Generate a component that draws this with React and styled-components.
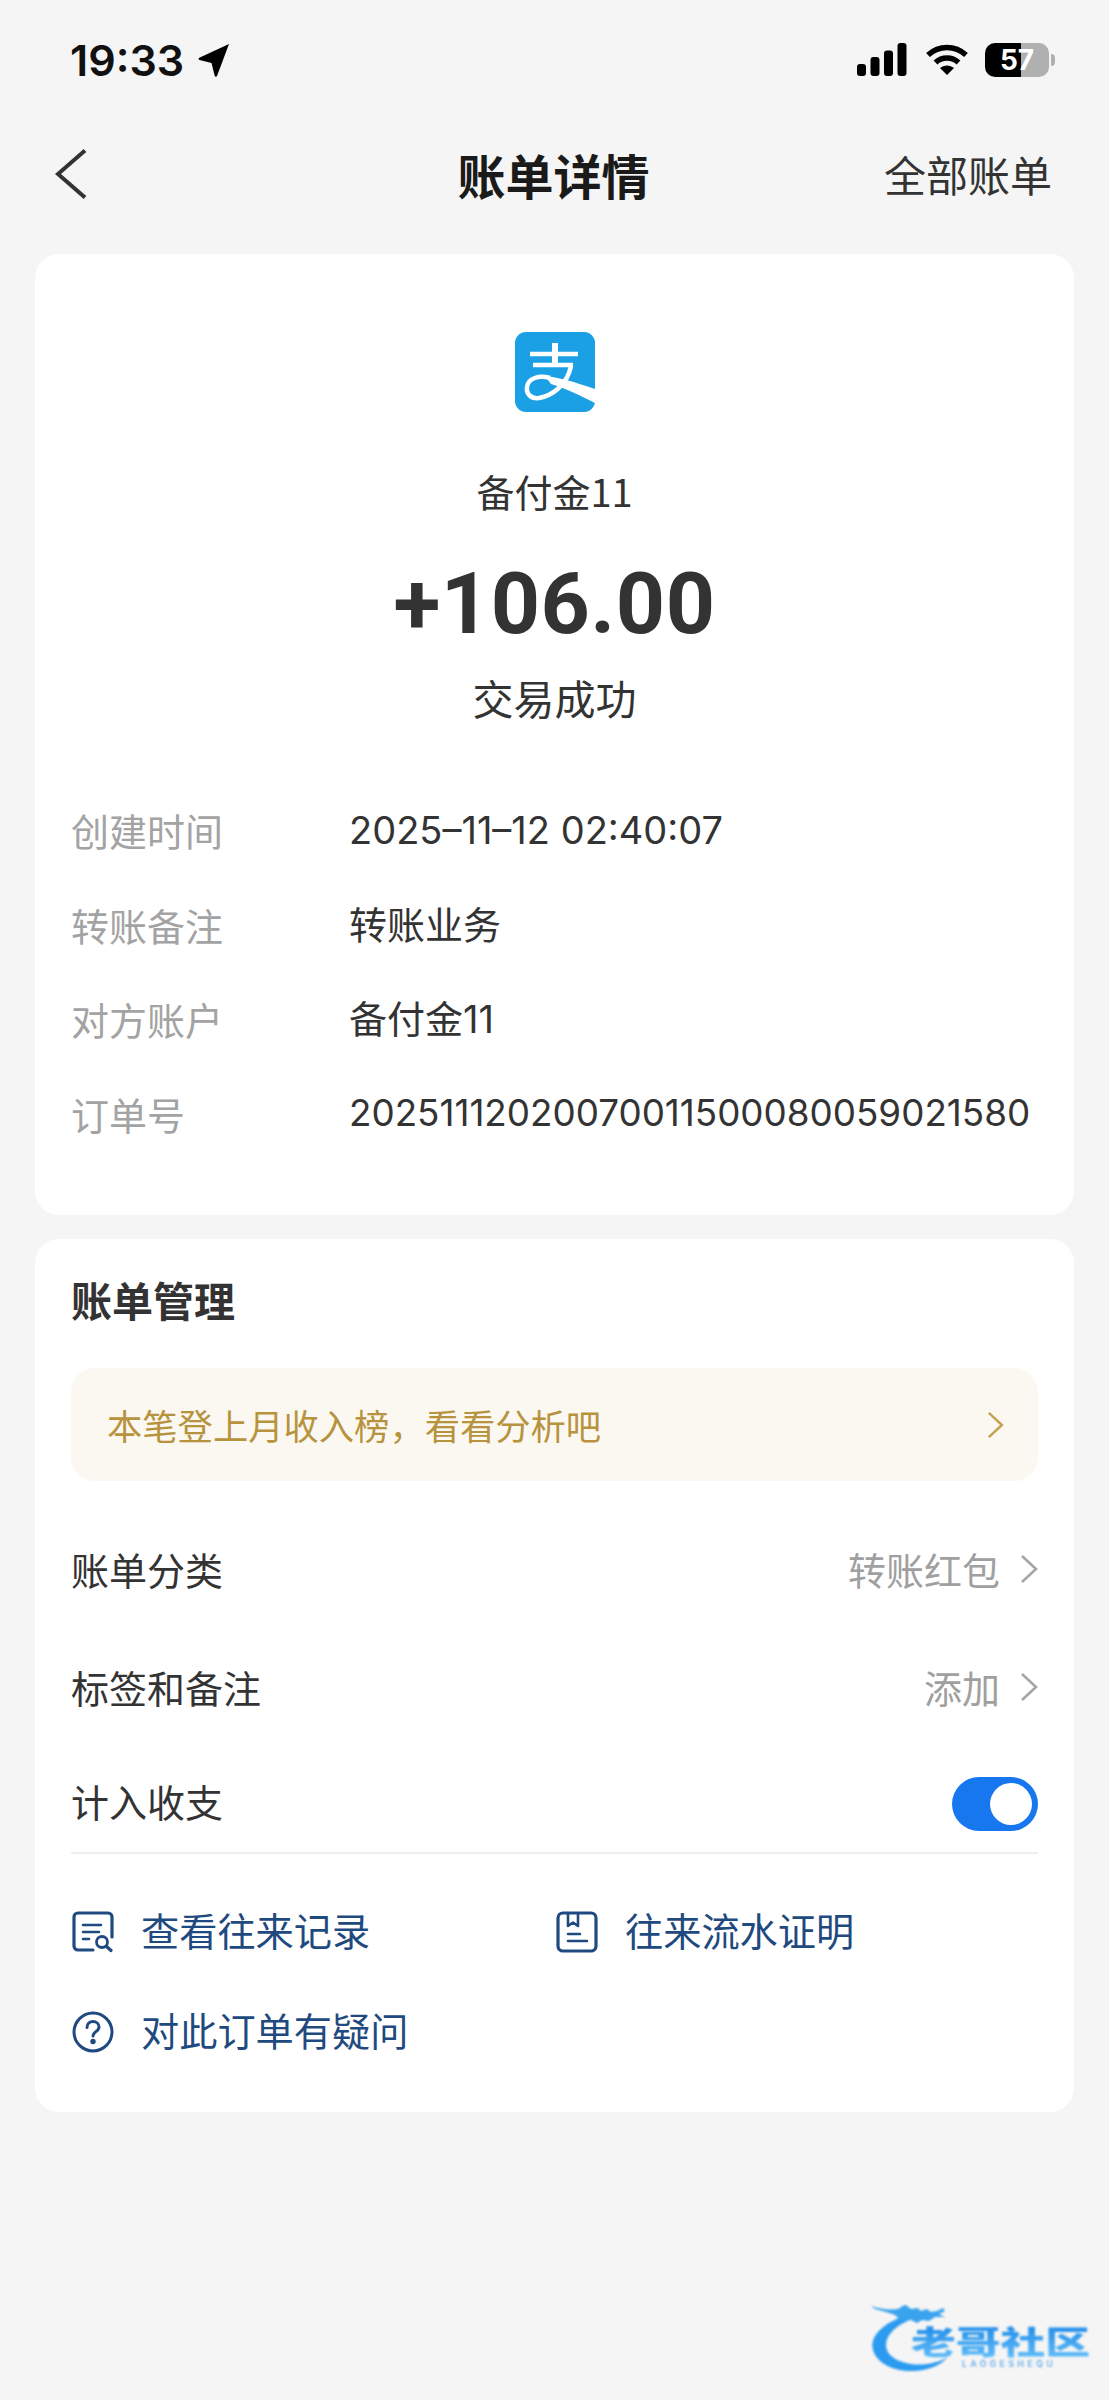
import React from "react";
import styled, { createGlobalStyle } from "styled-components";

const CJK = `"Noto Sans CJK SC", "Noto Sans", sans-serif`;
const NUM = `Inter, "Noto Sans CJK SC", sans-serif`;

const Global = createGlobalStyle`
  html, body { margin: 0; padding: 0; background: #f5f5f5; }
  * { box-sizing: border-box; }
`;

const Page = styled.div`
  position: relative;
  width: 1109px;
  height: 2400px;
  background: #f5f5f5;
  font-family: ${NUM};
  color: #333;
  overflow: hidden;
`;

const StatusBar = styled.div`
  height: 120px;
  padding: 0 54px 0 70px;
  display: flex;
  align-items: center;
  justify-content: space-between;
`;
const TimeGroup = styled.div`
  display: flex;
  align-items: center;
  gap: 14px;
`;
const Time = styled.span`
  font: 600 43px/1 Inter, sans-serif;
  color: #111;
`;
const StatusIcons = styled.div`
  display: flex;
  align-items: center;
  gap: 18px;
`;
const Battery = styled.div`
  width: 64px;
  height: 34px;
  border-radius: 10px;
  overflow: hidden;
  background: linear-gradient(90deg, #000 0 36px, #b0b0b0 36px 100%);
  color: #fff;
  font: 700 28px/34px Inter, sans-serif;
  text-align: center;
`;
const BatteryWrap = styled.div`
  display: flex;
  align-items: center;
  gap: 2px;
  margin-left: -2px;
`;
const Nub = styled.div`
  width: 4px;
  height: 12px;
  border-radius: 0 4px 4px 0;
  background: #b0b0b0;
`;

const Nav = styled.div`
  height: 112px;
  padding: 0 57px 4px 55px;
  display: grid;
  grid-template-columns: 1fr auto 1fr;
  align-items: center;
`;
const Title = styled.div`
  font: 700 48px/1 ${CJK};
  color: #1a1a1a;
`;
const NavLink = styled.div`
  justify-self: end;
  font: 400 42px/1 ${CJK};
  color: #333;
`;

const Card = styled.section`
  margin: 0 35px;
  background: #fff;
  border-radius: 24px;
`;
const SummaryCard = styled(Card)`
  margin-top: 22px;
  height: 961px;
  padding-top: 78px;
`;
const Hero = styled.div`
  display: flex;
  flex-direction: column;
  align-items: center;
`;
const Payee = styled.div`
  margin-top: 51px;
  font: 400 38px/56px ${CJK};
  color: #333;
`;
const Amount = styled.div`
  margin-top: 35px;
  font: 700 86px/100px Roboto, ${NUM};
  color: #333;
  letter-spacing: 0.5px;
`;
const Status = styled.div`
  margin-top: 15px;
  font: 400 41px/56px ${CJK};
  color: #333;
`;
const Details = styled.div`
  margin-top: 58px;
  padding: 0 36px;
  display: flex;
  flex-direction: column;
`;
const DetailRow = styled.div`
  height: 94.5px;
  display: grid;
  grid-template-columns: 278px 1fr;
  align-items: center;
`;
const DetailLabel = styled.div`
  font: 400 38px/1 ${CJK};
  color: #a3a3a3;
`;
const DetailValue = styled.div`
  font: 400 ${(p) => (p.$tight ? 36.8 : 38)}px/1 ${NUM};
  color: #333;
  white-space: nowrap;
`;

const ManageCard = styled(Card)`
  margin-top: 24px;
  height: 873px;
  padding: 0 36px;
`;
const SectionTitle = styled.h2`
  margin: 0;
  height: 129px;
  padding-bottom: 8px;
  display: flex;
  align-items: center;
  font: 700 41px/1 ${CJK};
  color: #333;
`;
const Banner = styled.div`
  height: 113px;
  padding: 0 34px 0 36px;
  border-radius: 24px;
  background: #fbf8f2;
  display: flex;
  align-items: center;
  justify-content: space-between;
  font: 400 35.3px/1 ${CJK};
  color: #b8933d;
`;
const Rows = styled.div`
  margin-top: 33px;
  border-bottom: 2px solid #eeeeee;
`;
const Row = styled.div`
  height: ${(p) => p.$h}px;
  display: flex;
  align-items: center;
  justify-content: space-between;
  font: 400 38px/1 ${CJK};
  color: #333;
`;
const RowValue = styled.div`
  display: flex;
  align-items: center;
  gap: 20px;
  color: #a0a0a0;
`;
const Toggle = styled.div`
  margin-top: 6px;
  width: 86px;
  height: 54px;
  padding: 6px;
  border-radius: 27px;
  background: #1677ee;
  display: flex;
  justify-content: flex-end;
`;
const Knob = styled.div`
  width: 42px;
  height: 42px;
  border-radius: 50%;
  background: #fff;
`;
const Links = styled.div`
  margin-top: 26px;
  display: grid;
  grid-template-columns: 484px 1fr;
  grid-auto-rows: 100px;
`;
const LinkItem = styled.div`
  display: flex;
  align-items: center;
  gap: 27px;
  padding-left: 1px;
  font: 400 38.2px/1 ${CJK};
  color: #1f4a80;

  svg {
    margin-top: 4px;
  }
`;

const Watermark = styled.svg`
  position: absolute;
  left: 868px;
  top: 2300px;
  filter: blur(0.8px);
`;

const Chevron = ({ color, h = 30 }) => (
  <svg width={h * 0.6} height={h} viewBox="0 0 18 30" fill="none">
    <path d="M2 2l14 13L2 28" stroke={color} strokeWidth="2.6" />
  </svg>
);

const Signal = () => (
  <svg width="50" height="34" viewBox="0 0 50 34" fill="#000">
    <rect x="0" y="21" width="9" height="12" rx="3" />
    <rect x="13.500" y="14" width="9" height="19" rx="3" />
    <rect x="27" y="7.500" width="9" height="25.500" rx="3" />
    <rect x="40.500" y="0" width="9" height="33" rx="3" />
  </svg>
);

const Wifi = () => (
  <svg width="44" height="32" viewBox="0 0 44 32" fill="none" stroke="#000" strokeWidth="5.500">
    <path d="M3 11C14 1 30 1 41 11" />
    <path d="M10.500 18.500C17 12.500 27 12.500 33.500 18.500" />
    <path d="M22 31l-7-7c4-3.500 10-3.500 14 0z" fill="#000" stroke="none" />
  </svg>
);

const LocationArrow = () => (
  <svg width="32" height="34" viewBox="0 0 32 34" fill="#000">
    <path d="M31 1L19 33c-.5 1-2 1-2.300-.2L13.500 20 1.500 17c-1.200-.3-1.200-1.700-.2-2.200z" />
  </svg>
);

const BackIcon = () => (
  <svg width="32" height="50" viewBox="0 0 32 50" fill="none">
    <path d="M30 1.500L3 25l27 23.500" stroke="#333" strokeWidth="4" />
  </svg>
);

const AlipayLogo = () => (
  <svg width="80" height="80" viewBox="0 0 80 80">
    <rect width="80" height="80" rx="11" fill="#1ba0e5" />
    <g fill="none" stroke="#fff" strokeWidth="4.500">
      <path d="M15 22h48" />
      <path d="M40 11v22" strokeWidth="6" />
      <path d="M18 33h40" />
      <path d="M56 34c-4 20-20 30-32 32-8 1-13-4-12-11 1-9 12-12 23-9" />
    </g>
    <path d="M30 44c12 1 30 6 50 13v14c-16-8-30-15-44-19z" fill="#fff" />
  </svg>
);

const RecordIcon = () => (
  <svg width="42" height="42" viewBox="0 0 42 42" fill="none" stroke="#1f4a80" strokeWidth="3.200" strokeLinecap="round">
    <path d="M21 39H6a4 4 0 0 1-4-4V6a4 4 0 0 1 4-4h30a4 4 0 0 1 4 4v20" />
    <path d="M11 14h18M11 21h16M11 28h6" strokeWidth="2.600" />
    <circle cx="30" cy="31" r="5.500" strokeWidth="2.800" />
    <path d="M34.500 35.500l4.500 4" />
  </svg>
);

const ProofIcon = () => (
  <svg width="42" height="42" viewBox="0 0 42 42" fill="none" stroke="#1f4a80" strokeWidth="3.200" strokeLinecap="round" strokeLinejoin="round">
    <rect x="2" y="2" width="38" height="38" rx="5" />
    <path d="M12 3v12l5-3.500 5 3.500V3" strokeWidth="2.600" />
    <path d="M12 23h12M12 30h19" strokeWidth="2.600" />
  </svg>
);

const HelpIcon = () => (
  <svg width="42" height="42" viewBox="0 0 42 42" fill="none" stroke="#1f4a80" strokeWidth="3" strokeLinecap="round">
    <circle cx="21" cy="21" r="19" />
    <path d="M15 16.500c0-3.500 2.700-6 6-6s6 2.400 6 5.500c0 4.500-6 4.800-6 9" />
    <circle cx="21" cy="30.500" r="1.200" fill="#1f4a80" />
  </svg>
);

const WatermarkLogo = () => (
  <Watermark width="232" height="78" viewBox="0 0 232 78">
    <defs>
      <linearGradient id="wm" x1="0" y1="0" x2="0" y2="1">
        <stop offset="0" stopColor="#0f7fe6" />
        <stop offset="1" stopColor="#6cc4fa" />
      </linearGradient>
    </defs>
    <path d="M40 15C16 22 1 36 5 50c4 14 22 22 42 21 14-1 26-6 33-14-10 6-25 9-37 7-14-2-25-9-25-19 0-10 10-20 26-26z" fill="#2a9bf0" />
    <path d="M3 6c9 3 18 4 27 3 3-2 6-4 8-4l5 4 7-1 3 3 6-2 4 3 6-1 6-3 2 3-6 3 6 3-10 0-6 4-7-1-5 3-8-4-8 2-6-6-9-3-11-3z" fill="#3aa3ee" />
    <text transform="translate(43 54) scale(1.4 1)" fontFamily={CJK} fontWeight="900" fontSize="32" fill="url(#wm)">
      老哥社区
    </text>
    <text x="94" y="67" fontFamily="Inter, sans-serif" fontWeight="500" fontSize="8.500" letterSpacing="3.600" fill="#4a9fe6">
      LAOGESHEQU
    </text>
  </Watermark>
);

const details = [
  { label: "创建时间", value: "2025–11–12 02:40:07" },
  { label: "转账备注", value: "转账业务" },
  { label: "对方账户", value: "备付金11" },
  { label: "订单号", value: "20251112020070011500080059021580", tight: true },
];

export default function App() {
  return (
    <Page>
      <Global />
      <StatusBar>
        <TimeGroup>
          <Time>19:33</Time>
          <LocationArrow />
        </TimeGroup>
        <StatusIcons>
          <Signal />
          <Wifi />
          <BatteryWrap>
            <Battery>57</Battery>
            <Nub />
          </BatteryWrap>
        </StatusIcons>
      </StatusBar>

      <Nav>
        <BackIcon />
        <Title>账单详情</Title>
        <NavLink>全部账单</NavLink>
      </Nav>

      <SummaryCard>
        <Hero>
          <AlipayLogo />
          <Payee>备付金11</Payee>
          <Amount>+106.00</Amount>
          <Status>交易成功</Status>
        </Hero>
        <Details>
          {details.map(({ label, value, tight }) => (
            <DetailRow key={label}>
              <DetailLabel>{label}</DetailLabel>
              <DetailValue $tight={tight}>{value}</DetailValue>
            </DetailRow>
          ))}
        </Details>
      </SummaryCard>

      <ManageCard>
        <SectionTitle>账单管理</SectionTitle>
        <Banner>
          本笔登上月收入榜，看看分析吧
          <Chevron color="#c4a14f" h={28} />
        </Banner>
        <Rows>
          <Row $h={110}>
            账单分类
            <RowValue>
              转账红包
              <Chevron color="#a5a5a5" />
            </RowValue>
          </Row>
          <Row $h={126}>
            标签和备注
            <RowValue>
              添加
              <Chevron color="#a5a5a5" />
            </RowValue>
          </Row>
          <Row $h={102}>
            计入收支
            <Toggle>
              <Knob />
            </Toggle>
          </Row>
        </Rows>
        <Links>
          <LinkItem>
            <RecordIcon />
            查看往来记录
          </LinkItem>
          <LinkItem>
            <ProofIcon />
            往来流水证明
          </LinkItem>
          <LinkItem>
            <HelpIcon />
            对此订单有疑问
          </LinkItem>
        </Links>
      </ManageCard>

      <WatermarkLogo />
    </Page>
  );
}
